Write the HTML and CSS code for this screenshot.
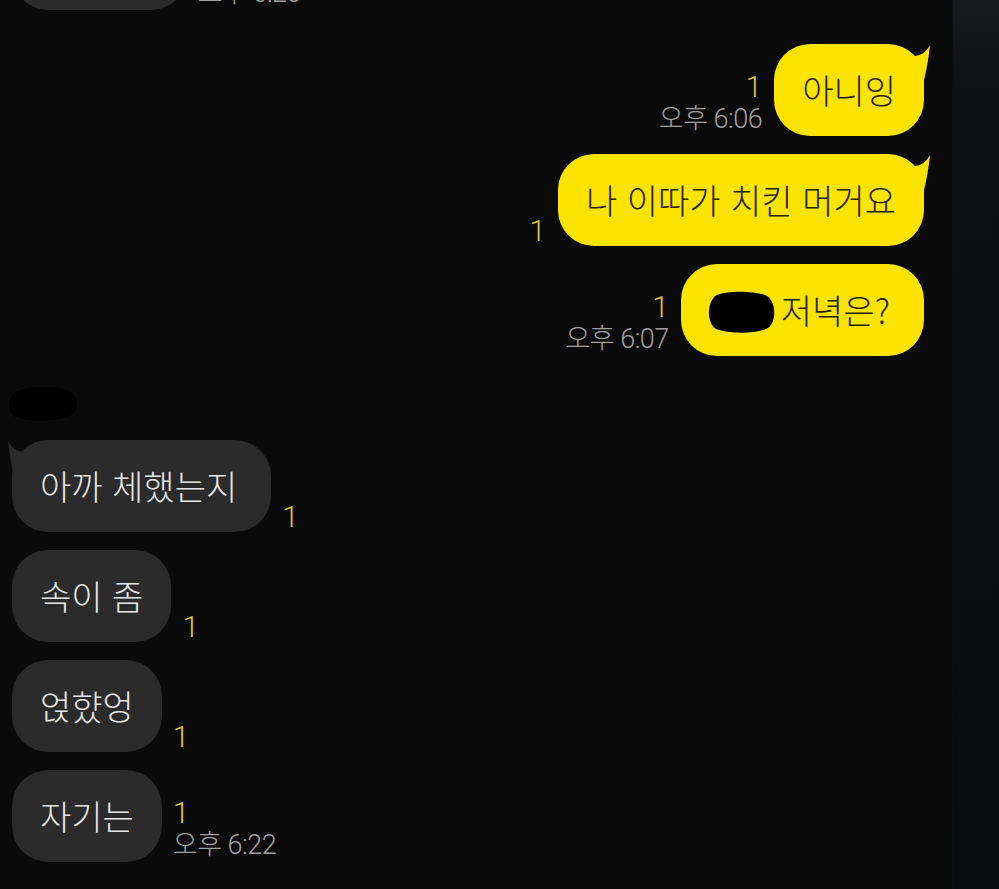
FILE: index.html
```html
<!DOCTYPE html>
<html lang="ko">
<head>
  <meta charset="utf-8">
  <meta name="viewport" content="width=device-width, initial-scale=1">
  <title>채팅</title>
  <link rel="stylesheet" href="styles.css">
</head>
<body class="kt-page">

<main class="kt-chat">

  <div class="kt-row kt-recv kt-first">
    <div class="kt-bubble">응 졸려?</div>
    <div class="kt-meta">
      <span class="kt-time">오후 6:20</span>
    </div>
  </div>

  <div class="kt-row kt-sent kt-gap">
    <div class="kt-meta">
      <span class="kt-read">1</span>
      <span class="kt-time">오후 6:06</span>
    </div>
    <div class="kt-bubble kt-tail">
      아니잉
      <svg class="kt-horn" viewBox="0 0 18 36" width="18" height="36"><path d="M3,12 Q13,11 18,1 Q16,20 12,36 L0,36 Z"/></svg>
    </div>
  </div>

  <div class="kt-row kt-sent">
    <div class="kt-meta">
      <span class="kt-read">1</span>
    </div>
    <div class="kt-bubble kt-tail">
      나 이따가 치킨 머거요
      <svg class="kt-horn" viewBox="0 0 18 36" width="18" height="36"><path d="M3,12 Q13,11 18,1 Q16,20 12,36 L0,36 Z"/></svg>
    </div>
  </div>

  <div class="kt-row kt-sent">
    <div class="kt-meta">
      <span class="kt-read">1</span>
      <span class="kt-time">오후 6:07</span>
    </div>
    <div class="kt-bubble kt-wide">
      <svg class="kt-scribble" viewBox="0 0 68 42" width="68" height="42"><path d="M10,4 C22,-1 50,0 60,5 C69,11 70,30 61,37 C50,43 22,43 9,38 C0,33 -1,10 10,4 Z"/></svg>저녁은?
    </div>
  </div>

  <div class="kt-name">
    <svg viewBox="0 0 72 36" width="72" height="36"><path d="M9,6 C20,0 52,-1 64,6 C72,11 72,25 63,30 C48,36 22,36 9,31 C0,27 0,11 9,6 Z"/></svg>
  </div>

  <div class="kt-row kt-recv">
    <div class="kt-bubble kt-tail kt-wide">
      아까 체했는지
      <svg class="kt-horn" viewBox="0 0 18 36" width="18" height="36"><path d="M3,12 Q13,11 18,1 Q16,20 12,36 L0,36 Z"/></svg>
    </div>
    <div class="kt-meta">
      <span class="kt-read">1</span>
    </div>
  </div>

  <div class="kt-row kt-recv">
    <div class="kt-bubble">속이 좀</div>
    <div class="kt-meta">
      <span class="kt-read">1</span>
    </div>
  </div>

  <div class="kt-row kt-recv">
    <div class="kt-bubble">얹햤엉</div>
    <div class="kt-meta">
      <span class="kt-read">1</span>
    </div>
  </div>

  <div class="kt-row kt-recv">
    <div class="kt-bubble">자기는</div>
    <div class="kt-meta">
      <span class="kt-read">1</span>
      <span class="kt-time">오후 6:22</span>
    </div>
  </div>

</main>

<aside class="kt-edge"></aside>

</body>
</html>
```

FILE: styles.css
```css
*,
*::before,
*::after {
  box-sizing: border-box;
}

html,
body {
  height: 100%;
}

.kt-page {
  margin: 0;
  display: flex;
  background: #0a0a0a;
  overflow: hidden;
  font-family: "Noto Sans CJK KR", sans-serif;
}

.kt-chat {
  flex: 1;
  display: flex;
  flex-direction: column;
  gap: 18px;
}

.kt-edge {
  width: 47px;
  background: linear-gradient(#18191b, #0d1013 12%, #0c0f12 60%, #0b0d10);
  border-left: 1px solid #0e0f11;
}

.kt-row {
  display: flex;
  align-items: flex-end;
}

.kt-first {
  margin-top: -82px;
}

.kt-gap {
  margin-top: 16px;
}

.kt-sent {
  justify-content: flex-end;
  padding-right: 28px;
}

.kt-recv {
  padding-left: 12px;
}

.kt-bubble {
  position: relative;
  padding: 22px 28px;
  line-height: 48px;
  font-size: 34px;
  font-weight: 300;
  border-radius: 36px;
  white-space: nowrap;
}

.kt-wide {
  padding-right: 34px;
}

.kt-sent .kt-bubble {
  background: #fde400;
  color: #26230f;
}

.kt-recv .kt-bubble {
  background: #2b2b2b;
  color: #e6e6e6;
}

.kt-horn {
  position: absolute;
  top: 0;
  right: -6px;
  display: block;
}

.kt-sent .kt-horn {
  fill: #fde400;
}

.kt-recv .kt-horn {
  fill: #2b2b2b;
  right: auto;
  left: -4px;
  transform: scaleX(-1);
}

.kt-scribble {
  display: inline-block;
  vertical-align: middle;
  margin: -6px 6px 0 -2px;
  fill: #000;
}

.kt-name {
  margin-top: 12px;
  height: 36px;
  padding-left: 7px;
}

.kt-name svg {
  display: block;
  fill: #000;
}

.kt-meta {
  display: flex;
  flex-direction: column;
  margin: 0 12px 0;
  font-family: Roboto, "Noto Sans CJK KR", sans-serif;
  font-weight: 300;
}

.kt-sent .kt-meta {
  align-items: flex-end;
}

.kt-recv .kt-meta {
  align-items: flex-start;
  margin: 0 11px 0;
}

.kt-read {
  font-size: 30px;
  line-height: 30px;
  color: #dcc736;
}

.kt-time {
  font-size: 27px;
  line-height: 34px;
  color: #a0a0a0;
  letter-spacing: -0.5px;
}
```
